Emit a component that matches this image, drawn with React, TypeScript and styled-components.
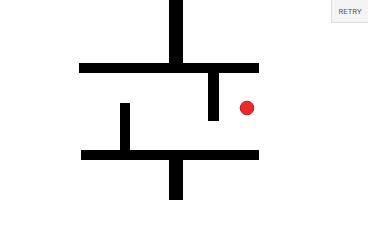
import React from "react";
import styled, { createGlobalStyle } from "styled-components";

const GlobalStyle = createGlobalStyle`
  html, body {
    margin: 0;
    padding: 0;
    background: #fff;
  }
`;

const Stage = styled.div`
  position: relative;
  width: 368px;
  height: 200px;
  overflow: hidden;
  background: #ffffff;
`;

const Board = styled.svg`
  display: block;
`;

const RetryButton = styled.button`
  position: absolute;
  top: -1px;
  right: -1px;
  width: 38px;
  height: 24px;
  padding: 0;
  border: 1px solid #dcdcdc;
  background: #f4f4f4;
  color: #5a5a5a;
  font-family: Roboto, "Liberation Sans", sans-serif;
  font-size: 7.6px;
  letter-spacing: 0.1px;
  text-transform: uppercase;
  cursor: pointer;
`;

interface Wall {
  x: number;
  y: number;
  w: number;
  h: number;
}

const walls: Wall[] = [
  { x: 169, y: 0, w: 14, h: 64 },
  { x: 79, y: 63, w: 180, h: 10 },
  { x: 208, y: 72, w: 11, h: 49 },
  { x: 120, y: 103, w: 10, h: 48 },
  { x: 81, y: 150, w: 178, h: 10 },
  { x: 169, y: 159, w: 14, h: 41 },
];

const App: React.FC = () => {
  return (
    <>
      <GlobalStyle />
      <Stage>
        <Board width={368} height={200} viewBox="0 0 368 200">
          {walls.map((w, i) => (
            <rect key={i} x={w.x} y={w.y} width={w.w} height={w.h} fill="#000" />
          ))}
          <circle cx={247} cy={108} r={6.8} fill="#ea2b2b" stroke="#c01818" strokeWidth={1} />
        </Board>
        <RetryButton>Retry</RetryButton>
      </Stage>
    </>
  );
};

export default App;
